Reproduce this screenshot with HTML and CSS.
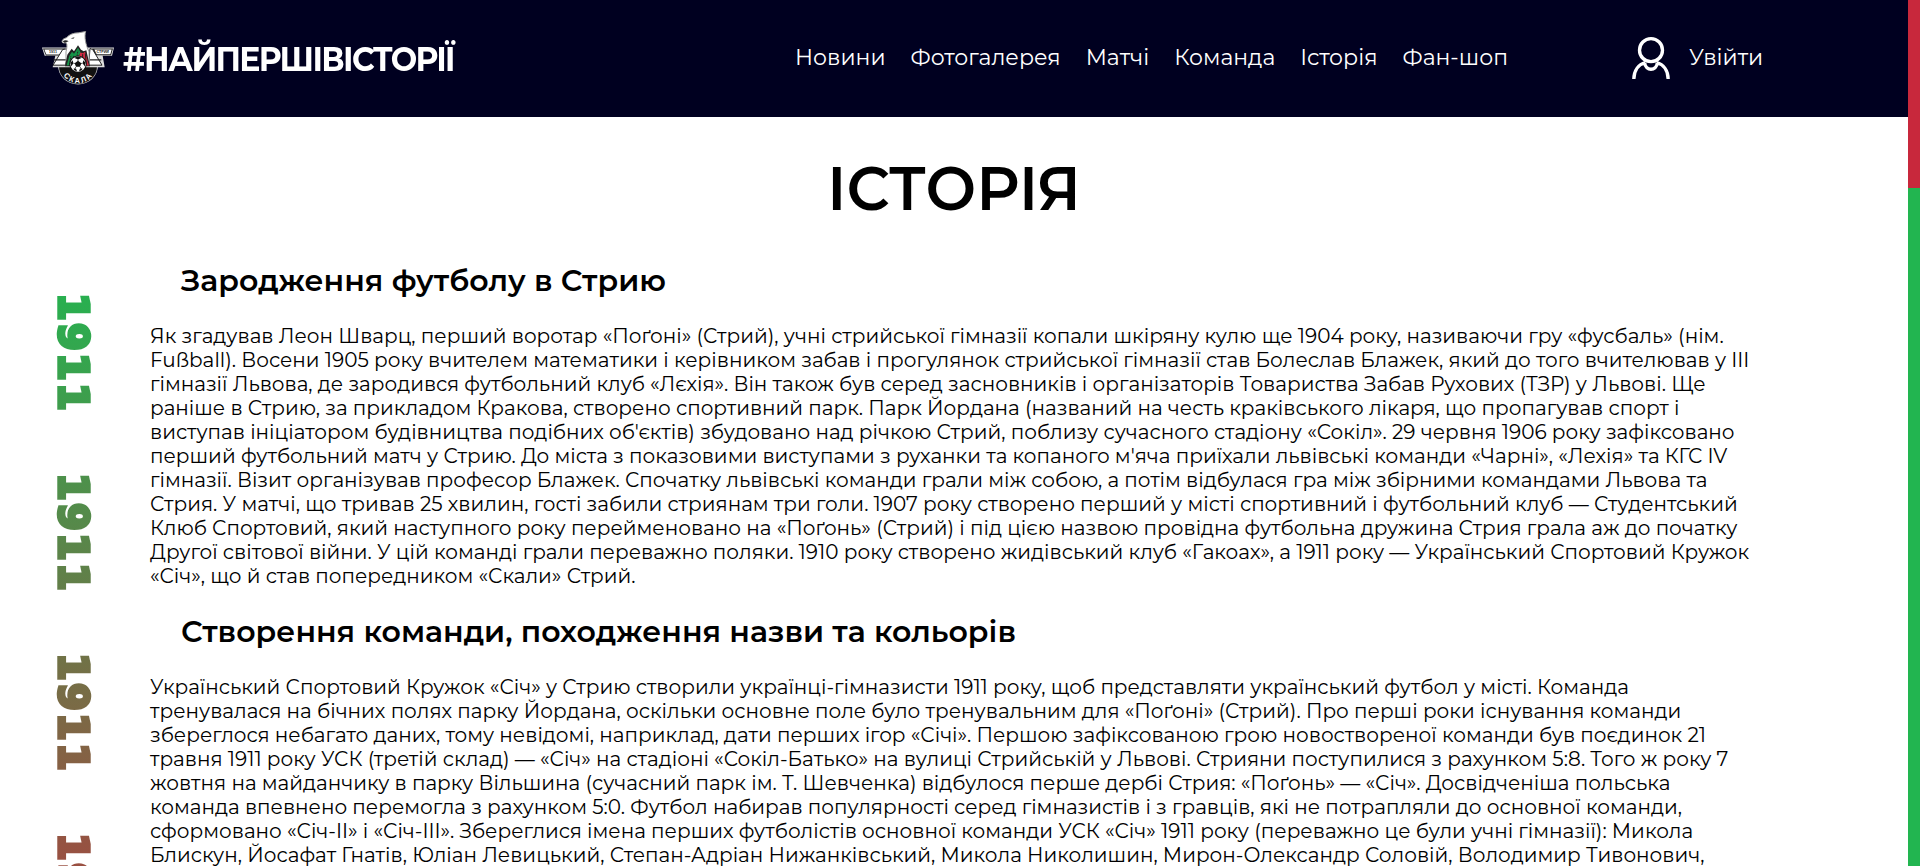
FILE: index.html
```html
<!DOCTYPE html>
<html lang="uk">
<head>
<meta charset="utf-8">
<title>Історія</title>
<link rel="stylesheet" href="styles.css">
</head>
<body>
<div class="page">
<header class="header">
  <a class="brand">
    <svg class="brand-logo" viewBox="36 34 216 161" aria-hidden="true">
      <path d="M84 137h120A60 57 0 0 1 84 137z" fill="#ccc"/>
      <path d="M87 140h114A57 52 0 0 1 87 140z" fill="#111"/>
      <path d="M36 83h216l-6 25h-28l6 34H68l8-34H44z" fill="#ddd"/>
      <path d="M39 86h67l-12 21H48zM186 86h63l-6 20h-44z" fill="#222"/>
      <path d="M43 89h56l-8 15H49zM193 89h52l-4 14h-41z" fill="#fff"/>
      <path d="M98 89l-29 47h38l9-50zM188 89l28 47h-40l4-50z" fill="#fff" stroke="#222" stroke-width="3"/>
      <path d="M70 120h38M180 120h34" stroke="#222" stroke-width="4"/>
      <path d="M108 96c3-13 4-20 1-27-6 0-13 2-13-5 2-7 8-8 14-11 8-9 20-14 35-14l22-4c-5 16 0 39 10 61v40h-69z" fill="#fff" stroke="#999" stroke-width="3"/>
      <path d="M98 64c6-4 12-3 18 0-4 2-8 3-12 5zM122 55l12-3-4 5z" fill="#222"/>
      <path d="M105 139l7-34 13-18 7 7 12-18 9 14 8 4 8-3 11 48z" fill="#222"/>
      <path d="M110 137l8-29 8-12 6 6 12-18 8 14-22 36z" fill="#159447"/>
      <path d="M119 132l4-25M128 126l3-18M139 119l5-26" stroke="#222" stroke-width="3" stroke-dasharray="3 2"/>
      <path d="M151 98l8 2 6-4 12 41h-15l-15-28z" fill="#d12a42"/>
      <path d="M158 103v20M166 101l3 33" stroke="#222" stroke-width="3"/>
      <circle cx="144" cy="133" r="26" fill="#111"/>
      <circle cx="144" cy="133" r="23" fill="#fff"/>
      <path d="M144 123l10 7-4 11h-12l-4-11zM132 114l12-4 12 4-12 5zM122 128l6-7 2 10-7 9zM166 128l-6-7-2 10 7 9zM130 147l8-1 3 8-7-2zM158 147l-8-1-3 8 7-2z" fill="#111"/>
      <path d="M144 119v5M130 130l5 1M158 130l-5 1M138 141l-4 6M150 141l4 6" stroke="#111" stroke-width="2"/>
      <path id="arc" d="M94 143A50 47 0 0 0 194 143" fill="none"/>
      <text class="logo-arc"><textPath href="#arc" startOffset="51%" text-anchor="middle">СКАЛА</textPath></text>
      <text class="logo-small" x="69" y="101" text-anchor="middle">1911</text>
      <text class="logo-small" x="218" y="101" text-anchor="middle">СТРИЙ</text>
    </svg>
    <span class="brand-name">#НАЙПЕРШІВІСТОРІЇ</span>
  </a>
  <nav class="nav">
    <a>Новини</a>
    <a>Фотогалерея</a>
    <a>Матчі</a>
    <a>Команда</a>
    <a>Історія</a>
    <a>Фан-шоп</a>
  </nav>
  <a class="login">
    <svg class="login-icon" viewBox="96 51 114 126" aria-hidden="true">
      <circle cx="153" cy="90.500" r="34.500"/>
      <path d="M101.500 177C102 151 116 133 136 128M204.500 177C204 151 190 133 170 128M134 129C137 154 169 154 172 129"/>
    </svg>
    <span>Увійти</span>
  </a>
</header>
<main class="main">
  <h1 class="title">ІСТОРІЯ</h1>
  <div class="columns">
    <aside class="years"><span>1911</span><span>1911</span><span>1911</span><span>1911</span></aside>
    <div class="articles">
      <section class="article">
        <h2>Зародження футболу в Стрию</h2>
        <p>
          <span>Як згадував Леон Шварц, перший воротар «Поґоні» (Стрий), учні стрийської гімназії копали шкіряну кулю ще 1904 року, називаючи гру «фусбаль» (нім.</span>
          <span>Fußball). Восени 1905 року вчителем математики і керівником забав і прогулянок стрийської гімназії став Болеслав Блажек, який до того вчителював у III</span>
          <span>гімназії Львова, де зародився футбольний клуб «Лєхія». Він також був серед засновників і організаторів Товариства Забав Рухових (ТЗР) у Львові. Ще</span>
          <span>раніше в Стрию, за прикладом Кракова, створено спортивний парк. Парк Йордана (названий на честь краківського лікаря, що пропагував спорт і</span>
          <span>виступав ініціатором будівництва подібних об'єктів) збудовано над річкою Стрий, поблизу сучасного стадіону «Сокіл». 29 червня 1906 року зафіксовано</span>
          <span>перший футбольний матч у Стрию. До міста з показовими виступами з руханки та копаного м'яча приїхали львівські команди «Чарні», «Лехія» та КГС IV</span>
          <span>гімназії. Візит організував професор Блажек. Спочатку львівські команди грали між собою, а потім відбулася гра між збірними командами Львова та</span>
          <span>Стрия. У матчі, що тривав 25 хвилин, гості забили стриянам три голи. 1907 року створено перший у місті спортивний і футбольний клуб — Студентський</span>
          <span>Клюб Спортовий, який наступного року перейменовано на «Поґонь» (Стрий) і під цією назвою провідна футбольна дружина Стрия грала аж до початку</span>
          <span>Другої світової війни. У цій команді грали переважно поляки. 1910 року створено жидівський клуб «Гакоах», а 1911 року — Український Спортовий Кружок</span>
          <span>«Січ», що й став попередником «Скали» Стрий.</span>
        </p>
      </section>
      <section class="article">
        <h2>Створення команди, походження назви та кольорів</h2>
        <p>
          <span>Український Спортовий Кружок «Січ» у Стрию створили українці-гімназисти 1911 року, щоб представляти український футбол у місті. Команда</span>
          <span>тренувалася на бічних полях парку Йордана, оскільки основне поле було тренувальним для «Поґоні» (Стрий). Про перші роки існування команди</span>
          <span>збереглося небагато даних, тому невідомі, наприклад, дати перших ігор «Січі». Першою зафіксованою грою новоствореної команди був поєдинок 21</span>
          <span>травня 1911 року УСК (третій склад) — «Січ» на стадіоні «Сокіл-Батько» на вулиці Стрийській у Львові. Стрияни поступилися з рахунком 5:8. Того ж року 7</span>
          <span>жовтня на майданчику в парку Вільшина (сучасний парк ім. Т. Шевченка) відбулося перше дербі Стрия: «Поґонь» — «Січ». Досвідченіша польська</span>
          <span>команда впевнено перемогла з рахунком 5:0. Футбол набирав популярності серед гімназистів і з гравців, які не потрапляли до основної команди,</span>
          <span>сформовано «Січ-II» і «Січ-III». Збереглися імена перших футболістів основної команди УСК «Січ» 1911 року (переважно це були учні гімназії): Микола</span>
          <span>Блискун, Йосафат Гнатів, Юліан Левицький, Степан-Адріан Нижанківський, Микола Николишин, Мирон-Олександр Соловій, Володимир Тивонович,</span>
        </p>
      </section>
    </div>
  </div>
</main>
</div>
<div class="rail"><div class="rail-thumb"></div></div>
</body>
</html>
```
FILE: styles.css
```css
* { box-sizing: border-box; }
body {
  margin: 0;
  display: flex;
  height: 866px;
  overflow: hidden;
  background: #fff;
  color: #000;
  font-family: Montserrat, Inter, "Open Sans", sans-serif;
}
span, a { white-space: nowrap; }
.page { flex: 1; height: 866px; overflow: hidden; }
.rail { width: 12px; background: #22b550; }
.rail-thumb { height: 188px; background: #c8283c; }

.header {
  display: flex;
  height: 117px;
  background: #000020;
  color: #fff;
}
.brand { flex: none; display: flex; align-items: flex-start; padding-left: 42px; width: 795px; }
.brand-logo { flex: none; width: 72px; height: 54px; margin-top: 31px; }
.brand-name {
  margin: 39px 0 0 9px;
  font-size: 34px;
  line-height: 40px;
  font-weight: 700;
  letter-spacing: -1.800px;
  transform: scaleX(.924);
  transform-origin: 0 50%;
}
.logo-arc { font: 700 23px "Liberation Sans", sans-serif; fill: #fff; letter-spacing: 5px; }
.logo-small { font: 700 11px "Liberation Sans", sans-serif; fill: #222; }
.nav { flex: none; display: flex; gap: 25px; width: 837px; font-size: 22px; line-height: 30px; padding-top: 43px; }
.nav a { flex: none; }
.login { display: flex; gap: 19px; font-size: 22px; line-height: 30px; padding-top: 37px; }
.login span { margin-top: 6px; }
.login-icon { width: 38px; height: 42px; fill: none; stroke: #fff; stroke-width: 10; }

.title {
  margin: 36px 0 38px;
  font-size: 60px;
  line-height: 71px;
  font-weight: 600;
  text-align: center;
}
.columns { display: flex; }
.years {
  display: flex;
  flex-direction: column;
  gap: 60px;
  width: 150px;
  height: 838px;
  padding: 31px 0 0 51px;
  font: 700 40px/44px "DejaVu Sans", sans-serif;
  background: linear-gradient(#22b550, #c8283c);
  -webkit-background-clip: text;
  background-clip: text;
  color: transparent;
}
.years span {
  flex: none;
  width: 44px;
  height: 120px;
  writing-mode: vertical-rl;
  letter-spacing: 2.200px;
  -webkit-text-stroke: 3.500px transparent;
}
.article h2 {
  margin: 0 0 25px;
  padding-left: 31px;
  font-size: 30px;
  line-height: 37px;
  font-weight: 600;
}
.article p { margin: 0 0 25px; font-size: 20px; line-height: 24px; font-weight: 400; }
.article p span { display: block; width: max-content; }
```
